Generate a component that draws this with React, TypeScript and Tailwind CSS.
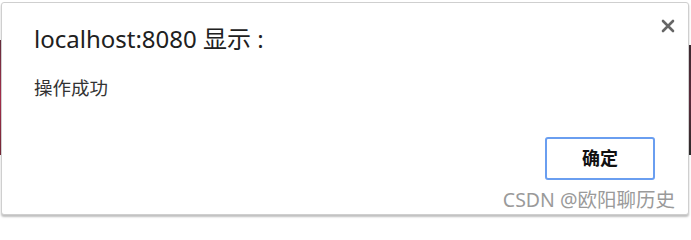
import React from "react";

const FONT = '"Noto Sans", "Noto Sans CJK SC", sans-serif';

function CloseIcon() {
  return (
    <svg width="14" height="14" viewBox="0 0 14 14" className="block">
      <path d="M2 2 L12 12 M12 2 L2 12" stroke="#666" strokeWidth="2.6" strokeLinecap="round" />
    </svg>
  );
}

export default function App() {
  return (
    <div className="w-[691px] h-[219px] bg-white flex overflow-hidden" style={{ fontFamily: FONT }}>
      <div className="w-[1px] h-full flex flex-col">
        <div className="h-[40px]" />
        <div className="h-[115px] bg-gradient-to-b from-[#6b3040] via-[#b03050] to-[#7a2a3a]" />
      </div>
      <div className="mt-[2px] w-[688px] h-[213px] bg-white border border-[#cfcfcf] rounded-[3px] shadow-[0_2px_2px_rgba(0,0,0,0.25)] flex flex-col">
        <div className="flex items-start justify-between pl-[32px] pr-[13px] pt-[21px]">
          <h1 className="text-[24px] leading-[30px] text-[#202020]">localhost:8080 显示 :</h1>
          <button className="mt-[-5px]">
            <CloseIcon />
          </button>
        </div>
        <p className="pl-[32px] mt-[22px] text-[18.5px] leading-[24px] text-[#333]">操作成功</p>
        <div className="flex justify-end pr-[33px] mt-[37px]">
          <button className="w-[110px] h-[43px] border-2 border-[#6a9ef0] rounded-[3px] bg-white text-[18px] font-bold text-[#111]">
            确定
          </button>
        </div>
        <div className="flex justify-end pr-[13px] mt-[8px]">
          <span className="text-[19.5px] leading-[24px] text-[#9a9a9a]">CSDN @欧阳聊历史</span>
        </div>
      </div>
      <div className="w-[2px] h-full flex flex-col">
        <div className="h-[45px]" />
        <div className="h-[110px] bg-gradient-to-b from-[#3a2a30] via-[#5a2a3a] to-[#2a2a2a]" />
      </div>
    </div>
  );
}
